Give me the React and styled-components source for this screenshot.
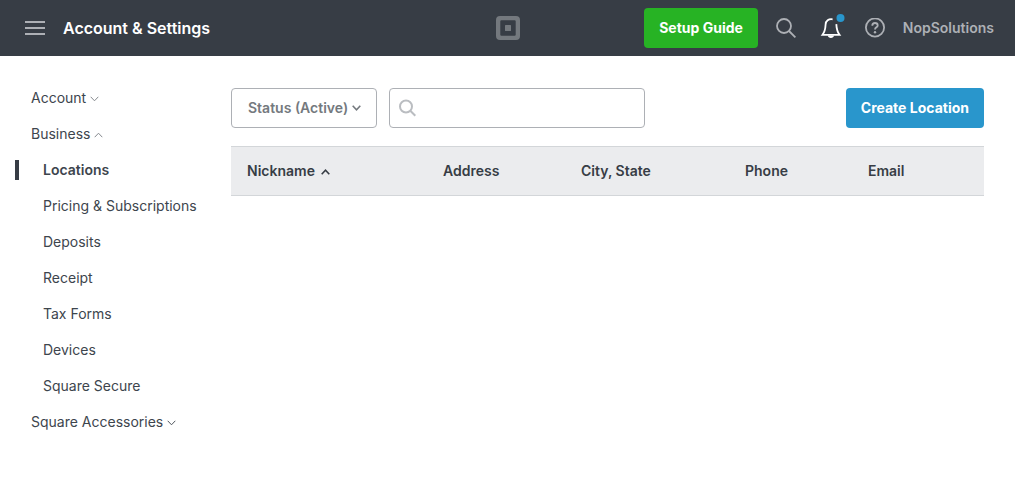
import React from "react";
import styled, { createGlobalStyle, css } from "styled-components";

const GlobalStyle = createGlobalStyle`
  *, *::before, *::after { box-sizing: border-box; }
  body {
    margin: 0;
    background: #fff;
    color: #3d454d;
    font: 400 14px/20px Inter, "Liberation Sans", sans-serif;
  }
  button, input, select { font: inherit; }
  svg { display: block; flex: none; }
`;

const TopBar = styled.header`
  display: grid;
  grid-template-columns: 1fr auto 1fr;
  align-items: center;
  height: 56px;
  padding: 0 21px 0 22px;
  background: #373d45;
`;

const BarGroup = styled.div`
  display: flex;
  align-items: center;
  justify-content: ${(p) => (p.$end ? "flex-end" : "flex-start")};
  gap: 18px;
  padding-left: 3px;
`;

const IconButton = styled.button`
  display: flex;
  padding: 0;
  border: 0;
  background: none;
  color: ${(p) => (p.$bright ? "#fff" : "#adb0b5")};
  cursor: pointer;
`;

const PageTitle = styled.h1`
  margin: 0;
  color: #fff;
  font-size: 16px;
  font-weight: 600;
  white-space: nowrap;
`;

const HomeLink = styled.a`
  display: block;
  color: #74797e;
`;

const AccountLink = styled.a`
  color: #adb0b5;
  font-weight: 600;
  text-decoration: none;
`;

const SolidButton = styled.button`
  height: 40px;
  padding: 0 15px;
  border: 0;
  border-radius: 4px;
  background: ${(p) => (p.$tone === "green" ? "#27b324" : "#2996cc")};
  color: #fff;
  font-weight: 700;
  white-space: nowrap;
  cursor: pointer;
`;

const Page = styled.div`
  display: grid;
  grid-template-columns: 216px minmax(0, 1fr);
  padding: 24px 31px 32px 15px;
`;

const NavList = styled.ul`
  margin: 0;
  padding: 0;
  list-style: none;
`;

const navRow = css`
  display: flex;
  align-items: center;
  width: 100%;
  height: 36px;
  padding: 0;
  color: #3d454d;
  white-space: nowrap;
`;

const NavToggle = styled.button`
  ${navRow}
  gap: 4px;
  padding-left: 16px;
  border: 0;
  background: none;
  text-align: left;
  cursor: pointer;
  svg { margin-top: 2px; color: ${(p) => (p.$dark ? "#50565d" : "#85898e")}; }
`;

const NavLink = styled.a`
  ${navRow}
  text-decoration: none;
  font-weight: ${(p) => (p.$active ? 600 : 400)};
  &::before {
    content: "";
    width: 4px;
    height: 20px;
    margin-right: 24px;
    background: ${(p) => (p.$active ? "#373d45" : "transparent")};
  }
`;

const Content = styled.main`
  padding-top: 8px;
`;

const Toolbar = styled.div`
  display: flex;
  align-items: center;
  justify-content: space-between;
  gap: 12px;
  margin-bottom: 18px;
`;

const Filters = styled.div`
  display: flex;
  gap: 12px;
`;

const Field = styled.label`
  position: relative;
  display: block;
  width: ${(p) => p.$width}px;
  svg {
    position: absolute;
    top: 50%;
    transform: translateY(-50%);
    pointer-events: none;
  }
`;

const control = css`
  display: block;
  width: 100%;
  height: 40px;
  border: 1px solid #adb0b5;
  border-radius: 4px;
  background: #fff;
`;

const StatusSelect = styled.select`
  ${control}
  appearance: none;
  padding: 0 24px 0 16px;
  color: #74797e;
  font-weight: 600;
  & + svg { right: 16px; color: #74797e; }
`;

const SearchInput = styled.input`
  ${control}
  padding: 0 12px 0 36px;
  & + svg { left: 10px; color: #babdc1; }
`;

const Table = styled.table`
  width: 100%;
  table-layout: fixed;
  border-collapse: separate;
  border-spacing: 0;
`;

const Col = styled.col`
  width: ${(p) => p.$width}px;
`;

const HeadCell = styled.th`
  height: 50px;
  padding: 0 16px;
  border: solid #d3d6d9;
  border-width: 1px 0;
  background: #ebecee;
  color: #373d45;
  font-weight: 600;
  text-align: left;
  white-space: nowrap;
`;

const SortButton = styled.button`
  display: flex;
  align-items: center;
  gap: 6px;
  padding: 0;
  border: 0;
  background: none;
  color: inherit;
  cursor: pointer;
  svg { margin-top: 2px; }
`;

const Chevron = ({ up, weight = 1 }) => (
  <svg width="9" height="6" viewBox="0 0 9 6" fill="none" stroke="currentColor" strokeWidth={weight} aria-hidden="true">
    <path d={up ? "M.7 5.200 4.500 1.200l3.800 4" : "M.7 .8l3.800 4 3.800-4"} />
  </svg>
);

const MenuIcon = () => (
  <svg width="20" height="14" viewBox="0 0 20 14" fill="currentColor" aria-hidden="true">
    <path d="M0 0h20v2H0zM0 6h20v2H0zM0 12h20v2H0z" />
  </svg>
);

const SquareLogo = () => (
  <svg width="24" height="24" viewBox="0 0 24 24" fill="currentColor" aria-hidden="true">
    <path
      fillRule="evenodd"
      d="M4 0h16a4 4 0 0 1 4 4v16a4 4 0 0 1-4 4H4a4 4 0 0 1-4-4V4a4 4 0 0 1 4-4ZM5.300 4.300a1 1 0 0 0-1 1v13.400a1 1 0 0 0 1 1h13.400a1 1 0 0 0 1-1V5.300a1 1 0 0 0-1-1Z"
    />
    <rect x="9" y="9" width="6" height="6" rx=".5" />
  </svg>
);

const SearchIcon = () => (
  <svg width="20" height="20" viewBox="0 0 20 20" fill="none" stroke="currentColor" strokeWidth="1.800" aria-hidden="true">
    <circle cx="8" cy="8" r="7" />
    <path d="m13 13 6.400 6.400" />
  </svg>
);

const FieldSearchIcon = () => (
  <svg width="18" height="18" viewBox="0 0 18 18" fill="none" stroke="currentColor" strokeWidth="2" aria-hidden="true">
    <circle cx="7" cy="7.500" r="6" />
    <path d="m11.300 11.800 5 5" />
  </svg>
);

const BellIcon = () => (
  <svg width="33" height="30" viewBox="0 0 33 30" fill="none" aria-hidden="true">
    <path
      d="M18.600 6.300c-4.100-.6-6.800 1.600-7 5.200-.2 4.200-.6 7.200-3.100 10.300h17c-2-2.600-2.900-5.600-3.200-10.700"
      stroke="currentColor"
      strokeWidth="1.800"
    />
    <path d="M13.700 22.500h6.400c-.3 1.600-1.500 2.500-3.200 2.500s-2.900-.9-3.200-2.500Z" fill="currentColor" />
    <circle cx="26.500" cy="5" r="4" fill="#2996cc" />
  </svg>
);

const HelpIcon = () => (
  <svg width="20" height="20" viewBox="0 0 20 20" fill="none" stroke="currentColor" strokeWidth="1.800" aria-hidden="true">
    <circle cx="10" cy="9.500" r="9.100" />
    <path d="M7.300 7.700c0-1.700 1.100-2.700 2.700-2.700s2.700 1 2.700 2.400c0 2-2.700 1.900-2.700 4.100" />
    <circle cx="10" cy="14.200" r="1.200" fill="currentColor" stroke="none" />
  </svg>
);

const businessLinks = [
  "Locations",
  "Pricing & Subscriptions",
  "Deposits",
  "Receipt",
  "Tax Forms",
  "Devices",
  "Square Secure",
];

const columns = [
  { label: "Nickname", width: 196, sorted: true },
  { label: "Address", width: 138 },
  { label: "City, State", width: 164 },
  { label: "Phone", width: 123 },
  { label: "Email", width: 132 },
];

export default function App() {
  return (
    <>
      <GlobalStyle />
      <TopBar>
        <BarGroup>
          <IconButton type="button" aria-label="Menu"><MenuIcon /></IconButton>
          <PageTitle>Account &amp; Settings</PageTitle>
        </BarGroup>
        <HomeLink href="#home" aria-label="Square home"><SquareLogo /></HomeLink>
        <BarGroup $end>
          <SolidButton type="button" $tone="green">Setup Guide</SolidButton>
          <IconButton type="button" aria-label="Search"><SearchIcon /></IconButton>
          <IconButton type="button" aria-label="Notifications" $bright><BellIcon /></IconButton>
          <IconButton type="button" aria-label="Help"><HelpIcon /></IconButton>
          <AccountLink href="#profile">NopSolutions</AccountLink>
        </BarGroup>
      </TopBar>
      <Page>
        <nav aria-label="Settings">
          <NavList>
            <li><NavToggle type="button" aria-expanded="false">Account <Chevron /></NavToggle></li>
            <li>
              <NavToggle type="button" aria-expanded="true">Business <Chevron up /></NavToggle>
              <NavList>
                {businessLinks.map((label, i) => (
                  <li key={label}>
                    <NavLink href="#section" $active={i === 0} aria-current={i === 0 ? "page" : undefined}>
                      {label}
                    </NavLink>
                  </li>
                ))}
              </NavList>
            </li>
            <li><NavToggle type="button" aria-expanded="false" $dark>Square Accessories <Chevron /></NavToggle></li>
          </NavList>
        </nav>
        <Content>
          <Toolbar>
            <Filters>
              <Field $width={146}>
                <StatusSelect aria-label="Status" defaultValue="active">
                  <option value="active">Status (Active)</option>
                </StatusSelect>
                <Chevron weight={1.6} />
              </Field>
              <Field $width={256}>
                <SearchInput type="search" aria-label="Search locations" />
                <FieldSearchIcon />
              </Field>
            </Filters>
            <SolidButton type="button" $tone="blue">Create Location</SolidButton>
          </Toolbar>
          <Table>
            <colgroup>
              {columns.map((c) => <Col key={c.label} $width={c.width} />)}
            </colgroup>
            <thead>
              <tr>
                {columns.map((c) => (
                  <HeadCell key={c.label} scope="col" aria-sort={c.sorted ? "ascending" : undefined}>
                    {c.sorted ? (
                      <SortButton type="button">{c.label} <Chevron up weight={1.6} /></SortButton>
                    ) : c.label}
                  </HeadCell>
                ))}
              </tr>
            </thead>
          </Table>
        </Content>
      </Page>
    </>
  );
}
